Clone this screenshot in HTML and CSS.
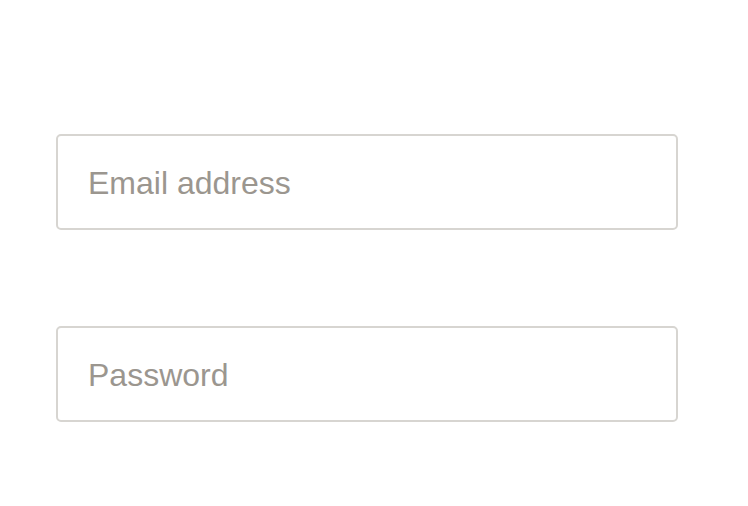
FILE: index.html
```html
<!DOCTYPE html>
<html>
<head>
<meta charset="utf-8">
<link rel="stylesheet" href="styles.css">
</head>
<body>
<form class="form">
  <input class="field" type="email" placeholder="Email address">
  <input class="field" type="password" placeholder="Password">
</form>
</body>
</html>
```
FILE: styles.css
```css
html, body {
  margin: 0;
  padding: 0;
  background: #ffffff;
}
.form {
  display: flex;
  flex-direction: column;
  gap: 96px;
  padding: 134px 70px 0 56px;
}
.field {
  box-sizing: border-box;
  width: 622px;
  height: 96px;
  border: 2px solid #d7d5d1;
  border-radius: 5px;
  padding: 2px 30px 0;
  font-family: "Liberation Sans", Arial, sans-serif;
  font-size: 32px;
  color: #333;
  background: #fff;
  outline: none;
}
.field::placeholder {
  color: #9b968f;
  opacity: 1;
}
```
